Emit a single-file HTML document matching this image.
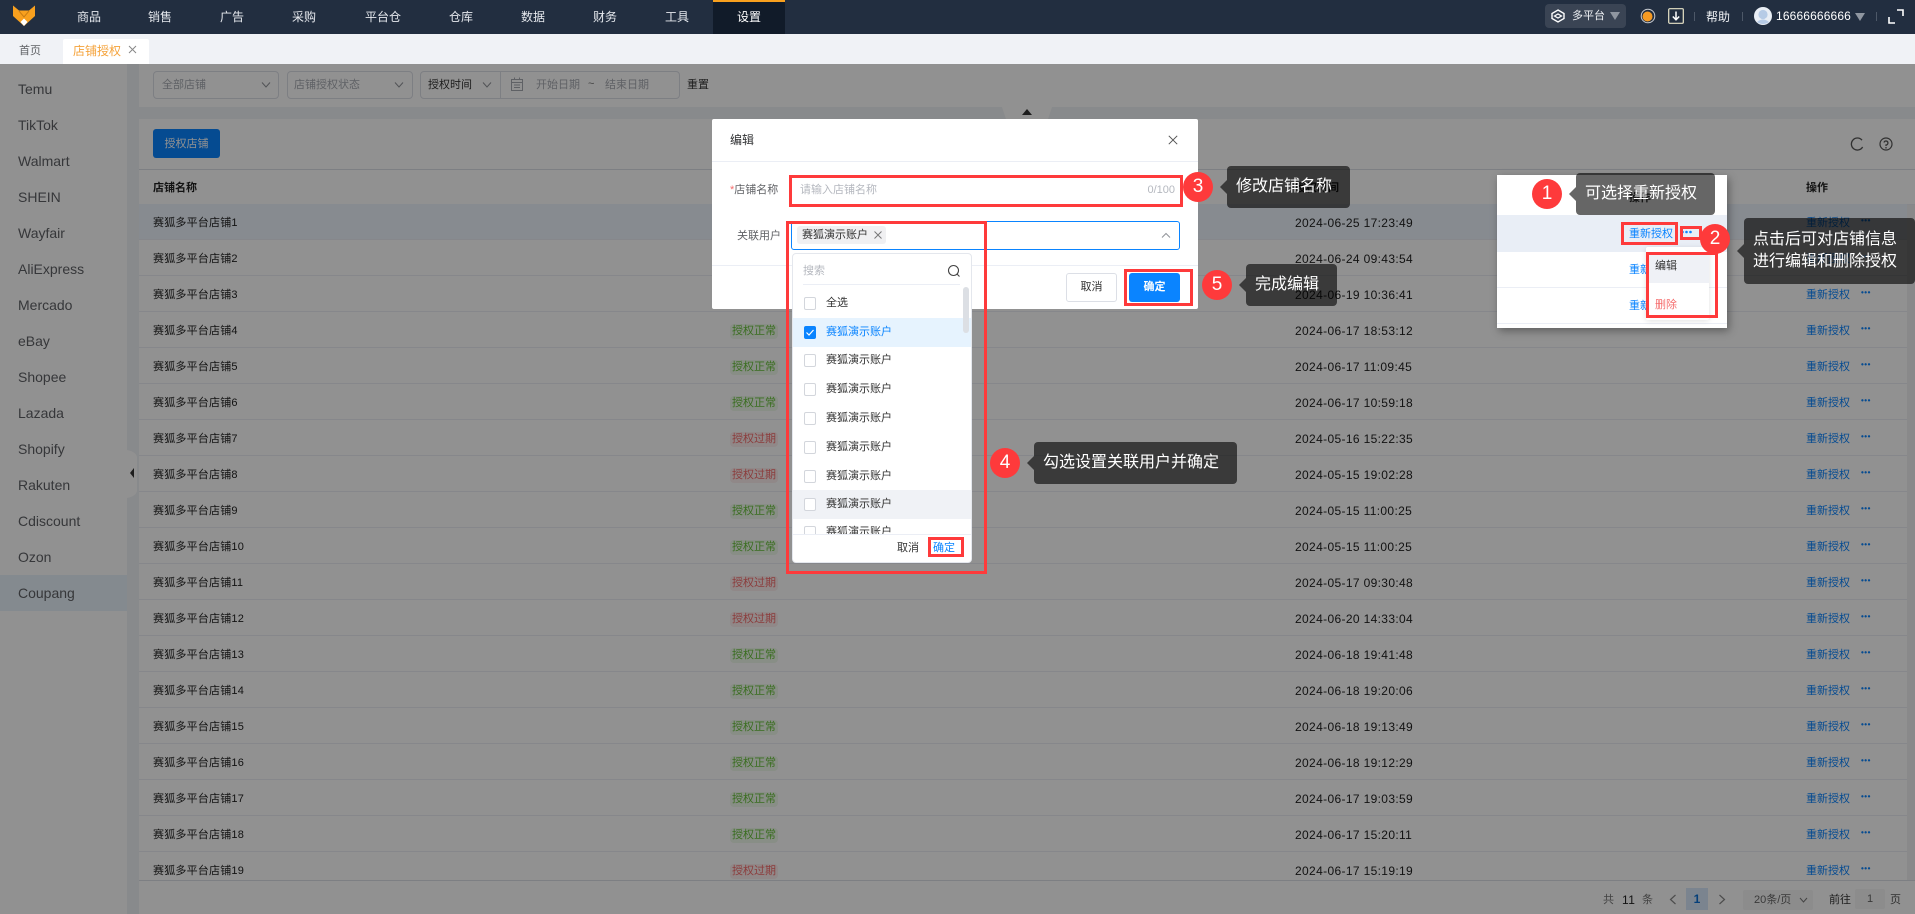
<!DOCTYPE html>
<html lang="zh-CN">
<head>
<meta charset="utf-8">
<title>店铺授权</title>
<style>
*{box-sizing:border-box;margin:0;padding:0}
html,body{width:1915px;height:914px;overflow:hidden;background:#f0f2f6}
body{position:relative;font-family:"Liberation Sans","Noto Sans CJK SC",sans-serif;font-size:11px;color:#333}
.a{position:absolute}
.t{position:absolute;white-space:nowrap;line-height:16px}
#nav{position:absolute;left:0;top:0;width:1915px;height:34px;background:#222e40;z-index:5}
#nav .n{position:absolute;top:9px;line-height:16px;font-size:12px;color:#e6e9ee;transform:translateX(-50%);white-space:nowrap}
#tabs{position:absolute;left:0;top:34px;width:1915px;height:30px;background:#f0f2f6;z-index:5}
#side{position:absolute;left:0;top:64px;width:127px;height:850px;background:#fff;padding-top:7px}
#side div{height:36px;line-height:36px;padding-left:18px;font-size:14px;color:#606266}
#side div.on{background:#e9f3fb}
.sel{position:absolute;top:71px;height:28px;border:1px solid #dcdfe6;border-radius:4px;background:#fff}
.ph{color:#a8abb2}
#main{position:absolute;left:139px;top:119px;width:1776px;height:795px;background:#fff}
#filter{position:absolute;left:139px;top:64px;width:1776px;height:43px;background:#fff}
#rows{position:absolute;left:139px;top:204px;width:1768px;height:676px;overflow:hidden}
.r{position:relative;height:36px;border-bottom:1px solid #ebeef5;background:#fff}
.r.h{background:#edf4fd}
.r span{position:absolute;white-space:nowrap;line-height:16px;top:11px}
.nm{left:14px;color:#222;letter-spacing:.2px}
.tg{left:591px;top:12px!important;width:48px;height:15px;line-height:15px!important;text-align:center;border-radius:4px}
.ok{background:#f0f9eb;color:#67c23a}
.ex{background:#fef0f0;color:#f56c6c}
.dt{left:1156px;font-size:12px;letter-spacing:.35px;color:#222}
.lk{left:1667px;color:#0a84ff}
.dd{left:1722px;top:9px!important;color:#0a84ff;font-weight:bold;font-size:8px;letter-spacing:.5px}
#ov{position:absolute;left:0;top:64px;width:1915px;height:850px;background:rgba(0,0,0,.43)}
#modal{position:absolute;left:712px;top:119px;width:486px;height:190px;background:#fff;border-radius:2px}
.box{position:absolute;border:3px solid #fe3a3b;z-index:20}
.c{position:absolute;width:30px;height:30px;margin:-15px 0 0 -15px;border-radius:50%;background:#fe3a3b;color:#fff;font-size:19px;line-height:30px;text-align:center;z-index:30}
.co{position:absolute;background:rgba(0,0,0,.6);color:#fff;font-size:16px;line-height:22px;border-radius:4px;z-index:25;white-space:nowrap}
.co:before{content:"";position:absolute;left:-7px;top:50%;margin-top:-7px;border:7px solid transparent;border-left:0;border-right-color:rgba(0,0,0,.6)}
#dp{position:absolute;left:792px;top:253px;width:180px;height:310px;background:#fff;border:1px solid #e4e7ed;border-radius:4px;z-index:10;overflow:hidden}
.o{position:absolute;left:0;width:180px;height:29px;line-height:29px;color:#333}
.o i{position:absolute;left:11px;top:8px;width:12px;height:13px;border:1px solid #d3d6dc;border-radius:2px;background:#fff}
.o b{font-weight:normal;position:absolute;left:33px;top:0}
#inset{position:absolute;left:1497px;top:175px;width:230px;height:153px;background:#fff;box-shadow:2px 3px 8px rgba(0,0,0,.35);z-index:15}
</style>
</head>
<body>

<div id="side">
<div>Temu</div><div>TikTok</div><div>Walmart</div><div>SHEIN</div><div>Wayfair</div><div>AliExpress</div><div>Mercado</div><div>eBay</div><div>Shopee</div><div>Lazada</div><div>Shopify</div><div>Rakuten</div><div>Cdiscount</div><div>Ozon</div><div class="on">Coupang</div>
</div>
<svg class="a" style="left:127px;top:450px" width="10" height="48"><path d="M0 0Q10 2 10 8V40Q10 46 0 48Z" fill="#fff"/><path d="M7 18L3 23L7 28Z" fill="#333"/></svg>

<div id="filter"></div>
<div class="sel" style="left:153px;width:126px"></div>
<div class="t ph" style="left:162px;top:77px">全部店铺</div>
<svg class="a" style="left:261px;top:81px" width="10" height="8"><path d="M1 1.5L5 6L9 1.5" fill="none" stroke="#909399"/></svg>
<div class="sel" style="left:287px;width:126px"></div>
<div class="t ph" style="left:294px;top:77px">店铺授权状态</div>
<svg class="a" style="left:394px;top:81px" width="10" height="8"><path d="M1 1.5L5 6L9 1.5" fill="none" stroke="#909399"/></svg>
<div class="sel" style="left:420px;width:260px"></div>
<div class="a" style="left:500px;top:71px;width:1px;height:28px;background:#dcdfe6"></div>
<div class="t" style="left:428px;top:77px;color:#333">授权时间</div>
<svg class="a" style="left:482px;top:81px" width="10" height="8"><path d="M1 1.5L5 6L9 1.5" fill="none" stroke="#909399"/></svg>
<svg class="a" style="left:511px;top:77px" width="12" height="14"><path d="M.5 2.5H11.5V13.5H.5ZM.5 5.5H11.5M3.5 .5V3M8.5 .5V3M3 8H9M3 10.5H9" fill="none" stroke="#a8abb2"/></svg>
<div class="t ph" style="left:536px;top:77px">开始日期</div>
<div class="t" style="left:588px;top:76px;color:#777">~</div>
<div class="t ph" style="left:605px;top:77px">结束日期</div>
<div class="t" style="left:687px;top:77px;color:#333">重置</div>

<div class="a" style="left:1002px;top:107px;width:50px;height:12px;background:#fff;clip-path:polygon(0 0,100% 0,92% 100%,8% 100%)"></div>
<svg class="a" style="left:1022px;top:109px" width="10" height="6"><path d="M5 0L10 6H0Z" fill="#333"/></svg>

<div id="main"></div>
<div class="a" style="left:153px;top:129px;width:67px;height:29px;background:#0a84ff;border-radius:3px;color:#fff;text-align:center;line-height:31px">授权店铺</div>
<svg class="a" style="left:1850px;top:137px" width="14" height="14"><path d="M12 3.2A6 6 0 1 0 12.6 10" fill="none" stroke="#555" stroke-width="1.3"/></svg>
<svg class="a" style="left:1879px;top:137px" width="14" height="14"><circle cx="7" cy="7" r="6" fill="none" stroke="#555" stroke-width="1.2"/><path d="M5 5.5A2 2 0 1 1 7 8V9" fill="none" stroke="#555" stroke-width="1.2"/><circle cx="7" cy="10.8" r=".8" fill="#555"/></svg>

<div class="a" style="left:139px;top:169px;width:1776px;height:36px;background:#fff;border-top:1px solid #dcdfe6;border-bottom:1px solid #ebeef5"></div>
<div class="t" style="left:153px;top:180px;font-weight:bold;color:#222">店铺名称</div>
<div class="t" style="left:1295px;top:180px;font-weight:bold;color:#222">授权时间</div>
<div class="t" style="left:1806px;top:180px;font-weight:bold;color:#222">操作</div>

<div id="rows">
<div class="r h"><span class="nm">赛狐多平台店铺1</span><span class="tg ok">授权正常</span><span class="dt">2024-06-25 17:23:49</span><span class="lk">重新授权</span><span class="dd">•••</span></div>
<div class="r"><span class="nm">赛狐多平台店铺2</span><span class="tg ok">授权正常</span><span class="dt">2024-06-24 09:43:54</span><span class="lk">重新授权</span><span class="dd">•••</span></div>
<div class="r"><span class="nm">赛狐多平台店铺3</span><span class="tg ok">授权正常</span><span class="dt">2024-06-19 10:36:41</span><span class="lk">重新授权</span><span class="dd">•••</span></div>
<div class="r"><span class="nm">赛狐多平台店铺4</span><span class="tg ok">授权正常</span><span class="dt">2024-06-17 18:53:12</span><span class="lk">重新授权</span><span class="dd">•••</span></div>
<div class="r"><span class="nm">赛狐多平台店铺5</span><span class="tg ok">授权正常</span><span class="dt">2024-06-17 11:09:45</span><span class="lk">重新授权</span><span class="dd">•••</span></div>
<div class="r"><span class="nm">赛狐多平台店铺6</span><span class="tg ok">授权正常</span><span class="dt">2024-06-17 10:59:18</span><span class="lk">重新授权</span><span class="dd">•••</span></div>
<div class="r"><span class="nm">赛狐多平台店铺7</span><span class="tg ex">授权过期</span><span class="dt">2024-05-16 15:22:35</span><span class="lk">重新授权</span><span class="dd">•••</span></div>
<div class="r"><span class="nm">赛狐多平台店铺8</span><span class="tg ex">授权过期</span><span class="dt">2024-05-15 19:02:28</span><span class="lk">重新授权</span><span class="dd">•••</span></div>
<div class="r"><span class="nm">赛狐多平台店铺9</span><span class="tg ok">授权正常</span><span class="dt">2024-05-15 11:00:25</span><span class="lk">重新授权</span><span class="dd">•••</span></div>
<div class="r"><span class="nm">赛狐多平台店铺10</span><span class="tg ok">授权正常</span><span class="dt">2024-05-15 11:00:25</span><span class="lk">重新授权</span><span class="dd">•••</span></div>
<div class="r"><span class="nm">赛狐多平台店铺11</span><span class="tg ex">授权过期</span><span class="dt">2024-05-17 09:30:48</span><span class="lk">重新授权</span><span class="dd">•••</span></div>
<div class="r"><span class="nm">赛狐多平台店铺12</span><span class="tg ex">授权过期</span><span class="dt">2024-06-20 14:33:04</span><span class="lk">重新授权</span><span class="dd">•••</span></div>
<div class="r"><span class="nm">赛狐多平台店铺13</span><span class="tg ok">授权正常</span><span class="dt">2024-06-18 19:41:48</span><span class="lk">重新授权</span><span class="dd">•••</span></div>
<div class="r"><span class="nm">赛狐多平台店铺14</span><span class="tg ok">授权正常</span><span class="dt">2024-06-18 19:20:06</span><span class="lk">重新授权</span><span class="dd">•••</span></div>
<div class="r"><span class="nm">赛狐多平台店铺15</span><span class="tg ok">授权正常</span><span class="dt">2024-06-18 19:13:49</span><span class="lk">重新授权</span><span class="dd">•••</span></div>
<div class="r"><span class="nm">赛狐多平台店铺16</span><span class="tg ok">授权正常</span><span class="dt">2024-06-18 19:12:29</span><span class="lk">重新授权</span><span class="dd">•••</span></div>
<div class="r"><span class="nm">赛狐多平台店铺17</span><span class="tg ok">授权正常</span><span class="dt">2024-06-17 19:03:59</span><span class="lk">重新授权</span><span class="dd">•••</span></div>
<div class="r"><span class="nm">赛狐多平台店铺18</span><span class="tg ok">授权正常</span><span class="dt">2024-06-17 15:20:11</span><span class="lk">重新授权</span><span class="dd">•••</span></div>
<div class="r"><span class="nm">赛狐多平台店铺19</span><span class="tg ex">授权过期</span><span class="dt">2024-06-17 15:19:19</span><span class="lk">重新授权</span><span class="dd">•••</span></div>
</div>
<div class="a" style="left:1907px;top:205px;width:8px;height:675px;background:#f1f1f3"></div>

<div class="a" style="left:139px;top:880px;width:1776px;height:34px;background:#fff;border-top:1px solid #dcdfe6"></div>
<div class="t" style="left:1603px;top:892px;color:#777">共</div>
<div class="t" style="left:1622px;top:892px;color:#222;font-size:12px;letter-spacing:.5px">11</div>
<div class="t" style="left:1642px;top:892px;color:#777">条</div>
<svg class="a" style="left:1669px;top:894px" width="8" height="11"><path d="M6.5 1L1.5 5.5L6.5 10" fill="none" stroke="#888" stroke-width="1.2"/></svg>
<div class="a" style="left:1686px;top:888px;width:22px;height:22px;background:#d9e9fb;color:#0a6fd6;font-weight:bold;font-size:12px;line-height:22px;text-align:center">1</div>
<svg class="a" style="left:1718px;top:894px" width="8" height="11"><path d="M1.5 1L6.5 5.5L1.5 10" fill="none" stroke="#888" stroke-width="1.2"/></svg>
<div class="a" style="left:1743px;top:890px;width:70px;height:20px;background:#f6f6f7;border-radius:2px"></div>
<div class="t" style="left:1754px;top:892px;color:#666;font-size:11px">20条/页</div>
<svg class="a" style="left:1799px;top:897px" width="9" height="7"><path d="M1 1L4.5 5L8 1" fill="none" stroke="#777"/></svg>
<div class="t" style="left:1829px;top:892px;color:#333">前往</div>
<div class="a" style="left:1855px;top:889px;width:30px;height:20px;background:#f6f6f7;border-radius:2px;color:#666;text-align:center;line-height:20px">1</div>
<div class="t" style="left:1890px;top:892px;color:#555">页</div>

<div id="ov"></div>

<div id="nav">
<svg class="a" style="left:12px;top:4px" width="24" height="23" viewBox="0 0 24 23"><path d="M1 1.5L7 6.5H17L23 1.5V12L12 22L1 12Z" fill="#f8a01e"/><path d="M7 7L12 13L17 7" fill="none" stroke="#c97d12" stroke-width="1"/><path d="M8.5 18L12 14.5L15.5 18L12 22Z" fill="#fff"/></svg>
<div class="a" style="left:713px;top:0;width:72px;height:34px;background:#111b29;border-top:2px solid #f8a01e"></div>
<div class="n" style="left:89px">商品</div><div class="n" style="left:160px">销售</div><div class="n" style="left:232px">广告</div><div class="n" style="left:304px">采购</div><div class="n" style="left:383px">平台仓</div><div class="n" style="left:461px">仓库</div><div class="n" style="left:533px">数据</div><div class="n" style="left:605px">财务</div><div class="n" style="left:677px">工具</div><div class="n" style="left:749px;color:#fff">设置</div>
<div class="a" style="left:1545px;top:4px;width:81px;height:24px;background:#3a4454;border-radius:4px"></div>
<svg class="a" style="left:1551px;top:9px" width="14" height="14" viewBox="0 0 14 14"><path d="M7 1L13 4.5V9.5L7 13L1 9.5V4.5Z" fill="none" stroke="#fff" stroke-width="1.4"/><path d="M3.5 7L7 5L10.5 7L7 9Z" fill="none" stroke="#fff" stroke-width="1.2"/></svg>
<div class="t" style="left:1572px;top:8px;color:#f0f2f5;font-size:11px">多平台</div>
<svg class="a" style="left:1610px;top:12px" width="10" height="8"><path d="M0 0H10L5 8Z" fill="#8f96a0"/></svg>
<svg class="a" style="left:1640px;top:8px" width="16" height="16"><circle cx="8" cy="8" r="6.8" fill="none" stroke="#c9ccd1" stroke-width="1"/><circle cx="7.5" cy="8.5" r="5" fill="#f59a23"/></svg>
<svg class="a" style="left:1668px;top:8px" width="16" height="16"><rect x=".7" y=".7" width="14.6" height="14.6" rx="1" fill="none" stroke="#e8e4c8" stroke-width="1.2"/><path d="M8 3.5V11.5M4.8 8.5L8 11.8L11.2 8.5" fill="none" stroke="#fff" stroke-width="1.5"/></svg>
<div class="a" style="left:1694px;top:12px;width:1px;height:9px;background:#4d5868"></div>
<div class="t" style="left:1706px;top:9px;color:#f0f2f5;font-size:12px">帮助</div>
<div class="a" style="left:1742px;top:12px;width:1px;height:9px;background:#4d5868"></div>
<svg class="a" style="left:1754px;top:7px" width="18" height="18"><circle cx="9" cy="9" r="9" fill="#e9eef5"/><circle cx="9" cy="7.5" r="4.6" fill="#b6cbe6"/><path d="M3 15Q9 10 15 15Q9 19 3 15Z" fill="#b6cbe6"/></svg>
<div class="t" style="left:1776px;top:8px;color:#fff;font-size:12px;letter-spacing:.14px">16666666666</div>
<svg class="a" style="left:1855px;top:13px" width="10" height="8"><path d="M0 0H10L5 8Z" fill="#8f96a0"/></svg>
<div class="a" style="left:1876px;top:12px;width:1px;height:9px;background:#4d5868"></div>
<svg class="a" style="left:1888px;top:9px" width="16" height="15"><path d="M9 1H15V7M1 8V14H7" fill="none" stroke="#fff" stroke-width="1.6"/></svg>
</div>

<div id="tabs">
<div class="t" style="left:19px;top:9px;color:#606266">首页</div>
<div class="a" style="left:63px;top:5px;width:86px;height:25px;background:#fff;border-radius:2px 2px 0 0"></div>
<div class="t" style="left:73px;top:9px;color:#f5a33b;font-size:12px">店铺授权</div>
<svg class="a" style="left:128px;top:11px" width="9" height="9"><path d="M1 1L8 8M8 1L1 8" stroke="#888" stroke-width="1"/></svg>
</div>

<div id="modal">
<div class="t" style="left:18px;top:13px;color:#303133;font-size:12px">编辑</div>
<svg class="a" style="left:456px;top:16px" width="10" height="10"><path d="M.8 .8L9.2 9.2M9.2 .8L.8 9.2" stroke="#555" stroke-width="1"/></svg>
<div class="a" style="left:0;top:42px;width:486px;height:1px;background:#ebeef5"></div>
<div class="t" style="left:18px;top:63px;color:#606266"><span style="color:#f56c6c">*</span>店铺名称</div>
<div class="t" style="left:25px;top:109px;color:#606266">关联用户</div>
<div class="t" style="left:88px;top:63px;color:#b5b8bf;font-size:11px">请输入店铺名称</div>
<div class="t" style="right:23px;top:63px;color:#b5b8bf;font-size:11px">0/100</div>
<div class="a" style="left:79px;top:102px;width:389px;height:29px;border:1px solid #0a84ff;border-radius:3px"></div>
<div class="a" style="left:85px;top:107px;width:89px;height:18px;background:#f0f0f2;border-radius:3px"></div>
<div class="t" style="left:90px;top:108px;color:#333">赛狐演示账户</div>
<svg class="a" style="left:162px;top:112px" width="8" height="8"><path d="M.5 .5L7.5 7.5M7.5 .5L.5 7.5" stroke="#777" stroke-width="1"/></svg>
<svg class="a" style="left:449px;top:113px" width="10" height="7"><path d="M1 5.5L5 1.5L9 5.5" fill="none" stroke="#909399"/></svg>
<div class="a" style="left:0;top:146px;width:486px;height:1px;background:#ebeef5"></div>
<div class="a" style="left:354px;top:154px;width:51px;height:29px;background:#fff;border:1px solid #dcdfe6;border-radius:3px;text-align:center;line-height:27px;color:#333">取消</div>
<div class="a" style="left:417px;top:154px;width:51px;height:29px;background:#0a84ff;border-radius:3px;text-align:center;line-height:29px;color:#fff;font-weight:bold">确定</div>
</div>

<div id="dp">
<div class="t" style="left:10px;top:9px;color:#b5b8bf">搜索</div>
<svg class="a" style="left:154px;top:10px" width="14" height="14"><circle cx="6.5" cy="6.5" r="5" fill="none" stroke="#444" stroke-width="1.1"/><path d="M10 10L12.5 12.5" stroke="#444" stroke-width="1.1"/></svg>
<div class="a" style="left:10px;top:30px;width:157px;height:1px;background:#ebeef5"></div>
<div class="o" style="top:35px"><i></i><b>全选</b></div>
<div class="o" style="top:64px;background:#e6f3fe;color:#0a84ff"><i style="background:#0a84ff;border-color:#0a84ff"></i><svg class="a" style="left:12px;top:10px" width="10" height="9"><path d="M1.5 4.5L4 7L8.5 2" fill="none" stroke="#fff" stroke-width="1.2"/></svg><b>赛狐演示账户</b></div>
<div class="o" style="top:92px"><i></i><b>赛狐演示账户</b></div>
<div class="o" style="top:121px"><i></i><b>赛狐演示账户</b></div>
<div class="o" style="top:150px"><i></i><b>赛狐演示账户</b></div>
<div class="o" style="top:179px"><i></i><b>赛狐演示账户</b></div>
<div class="o" style="top:208px"><i></i><b>赛狐演示账户</b></div>
<div class="o" style="top:236px;background:#f0f2f6"><i></i><b>赛狐演示账户</b></div>
<div class="o" style="top:264px"><i></i><b>赛狐演示账户</b></div>
<div class="a" style="left:170px;top:33px;width:6px;height:46px;background:#dcdfe4;border-radius:3px"></div>
<div class="a" style="left:0;top:280px;width:180px;height:30px;background:#fff;border-top:1px solid #ebeef5"></div>
<div class="t" style="left:104px;top:286px;color:#333">取消</div>
<div class="t" style="left:140px;top:286px;color:#0a84ff">确定</div>
</div>

<div id="inset">
<div class="a" style="left:0;top:40px;width:230px;height:37px;background:#e9eef6"></div>
<div class="a" style="left:0;top:112px;width:230px;height:1px;background:#ebeef5"></div>
<div class="a" style="left:0;top:148px;width:230px;height:1px;background:#ebeef5"></div>
<div class="t" style="left:132px;top:15px;font-weight:bold;color:#333">操作</div>
<div class="t" style="left:132px;top:51px;color:#0a84ff">重新授权</div>
<div class="t" style="left:132px;top:87px;color:#0a84ff">重新</div>
<div class="t" style="left:132px;top:123px;color:#0a84ff">重新</div>
<svg class="a" style="left:184px;top:55px" width="11" height="4"><circle cx="1.5" cy="2" r="1.3" fill="#0a84ff"/><circle cx="5.5" cy="2" r="1.3" fill="#0a84ff"/><circle cx="9.5" cy="2" r="1.3" fill="#0a84ff"/></svg>
<div class="a" style="left:149px;top:72px;width:63px;height:73px;background:#fff;box-shadow:0 1px 6px rgba(0,0,0,.12);border-radius:2px"></div>
<div class="a" style="left:149px;top:80px;width:63px;height:28px;background:#eff1f6"></div>
<div class="t" style="left:158px;top:83px;color:#333">编辑</div>
<div class="t" style="left:158px;top:122px;color:#f56c6c">删除</div>
</div>

<div class="box" style="left:789px;top:175px;width:394px;height:32px"></div>
<div class="box" style="left:786px;top:221px;width:201px;height:353px"></div>
<div class="box" style="left:928px;top:537px;width:36px;height:20px"></div>
<div class="box" style="left:1124px;top:269px;width:69px;height:37px"></div>
<div class="box" style="left:1621px;top:222px;width:57px;height:23px"></div>
<div class="box" style="left:1680px;top:226px;width:22px;height:14px"></div>
<div class="box" style="left:1646px;top:252px;width:72px;height:66px"></div>

<div class="c" style="left:1547px;top:194px">1</div>
<div class="c" style="left:1715px;top:239px">2</div>
<div class="c" style="left:1198px;top:187px">3</div>
<div class="c" style="left:1005px;top:463px">4</div>
<div class="c" style="left:1217px;top:285px">5</div>

<div class="co" style="left:1576px;top:173px;width:139px;height:42px;padding:10px 9px">可选择重新授权</div>
<div class="co" style="left:1744px;top:218px;width:171px;height:66px;padding:11px 9px">点击后可对店铺信息<br>进行编辑和删除授权</div>
<div class="co" style="left:1227px;top:166px;width:123px;height:42px;padding:10px 9px">修改店铺名称</div>
<div class="co" style="left:1034px;top:442px;width:203px;height:42px;padding:10px 9px">勾选设置关联用户并确定</div>
<div class="co" style="left:1246px;top:264px;width:91px;height:42px;padding:10px 9px">完成编辑</div>

</body>
</html>
